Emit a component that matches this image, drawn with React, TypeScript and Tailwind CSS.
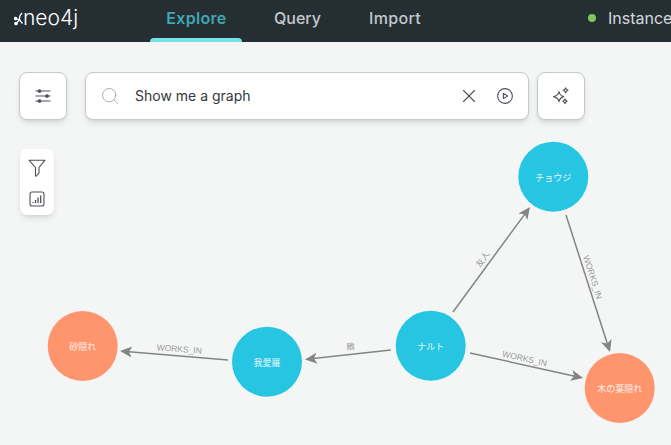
import React from "react";
import { Search, X } from "lucide-react";

const CJK = "'Liberation Sans','Noto Sans CJK JP',sans-serif";

const nodes = [
  { x: 82.7, y: 346, label: "砂隠れ", fill: "#ff956d" },
  { x: 267, y: 361.7, label: "我愛羅", fill: "#26c6e2" },
  { x: 430.7, y: 345.7, label: "ナルト", fill: "#26c6e2" },
  { x: 619.7, y: 388, label: "木の葉隠れ", fill: "#ff956d" },
  { x: 553.3, y: 176.7, label: "チョウジ", fill: "#26c6e2" },
];

const edges = [
  { x1: 228, y1: 360, x2: 120, y2: 351 },
  { x1: 391, y1: 350, x2: 305, y2: 359.5 },
  { x1: 470, y1: 353, x2: 583, y2: 378 },
  { x1: 453, y1: 312, x2: 530, y2: 207 },
  { x1: 566, y1: 215, x2: 610, y2: 352 },
];

const edgeLabels = [
  { x: 179, y: 352, rotate: 4.5, text: "WORKS_IN" },
  { x: 351, y: 349.5, rotate: -6, text: "敵" },
  { x: 524, y: 361.5, rotate: 12.5, text: "WORKS_IN" },
  { x: 485, y: 261, rotate: -54, text: "友人" },
  { x: 590, y: 278, rotate: 72, text: "WORKS_IN" },
];

function Arrow({ x1, y1, x2, y2 }: { x1: number; y1: number; x2: number; y2: number }) {
  const a = (Math.atan2(y2 - y1, x2 - x1) * 180) / Math.PI;
  return (
    <g>
      <line x1={x1} y1={y1} x2={x2 - 6 * Math.cos((a * Math.PI) / 180)} y2={y2 - 6 * Math.sin((a * Math.PI) / 180)} stroke="#848484" strokeWidth="1.5" />
      <path d="M0 0 L-12 -5.5 L-9 0 L-12 5.5 Z" fill="#848484" transform={`translate(${x2} ${y2}) rotate(${a})`} />
    </g>
  );
}

function Graph() {
  return (
    <svg className="absolute left-0 top-0" width="671" height="445" viewBox="0 0 671 445" style={{ fontFamily: CJK }}>
      {edges.map((e, i) => (
        <Arrow key={i} {...e} />
      ))}
      {edgeLabels.map((l, i) => (
        <text key={i} x={l.x} y={l.y} transform={`rotate(${l.rotate} ${l.x} ${l.y})`} textAnchor="middle" fontSize="8.5" fill="#999999">
          {l.text}
        </text>
      ))}
      {nodes.map((n) => (
        <g key={n.label}>
          <circle cx={n.x} cy={n.y} r="35" fill={n.fill} />
          <text x={n.x} y={n.y + 4} textAnchor="middle" fontSize="9" fill="#ffffff" fillOpacity="0.9">
            {n.label}
          </text>
        </g>
      ))}
    </svg>
  );
}

function Logo() {
  return (
    <div className="flex w-[150px] items-center pl-[14px] text-white">
      <svg width="11" height="16" viewBox="0 0 11 16" className="mt-[5px] -mr-[2px]" fill="none" stroke="#ffffff" strokeWidth="1.3">
        <path d="M8 1 C6 3 5 5 5.5 8 L8.5 11.5" />
        <path d="M1.5 6.5 L5.5 8 L2 11.5" />
        <circle cx="1.5" cy="6.5" r="1.2" fill="#ffffff" />
        <circle cx="2" cy="11.5" r="1.2" fill="#ffffff" />
      </svg>
      <span className="text-[21px] leading-none font-light font-['Inter',sans-serif]">neo4j</span>
    </div>
  );
}

function SlidersIcon() {
  return (
    <svg width="18" height="16" viewBox="0 0 18 16" fill="none" stroke="#4d5157" strokeWidth="1.1">
      <path d="M1.5 3 H16.5 M1.5 8 H16.5 M1.5 13 H16.5" />
      <circle cx="5.5" cy="3" r="1.3" fill="#4d5157" />
      <circle cx="13" cy="8" r="1.3" fill="#4d5157" />
      <circle cx="5.5" cy="13" r="1.3" fill="#4d5157" />
    </svg>
  );
}

function SparkleIcon() {
  return (
    <svg width="18" height="18" viewBox="0 0 18 18" fill="none" stroke="#4d5157" strokeWidth="1.1" strokeLinejoin="round">
      <path d="M7 4.5 C7.6 7.6 8.6 8.8 11.6 9.6 C8.6 10.4 7.6 11.6 7 14.7 C6.4 11.6 5.4 10.4 1.6 9.6 C5.4 8.8 6.4 7.6 7 4.5 Z" />
      <path d="M13.6 .8 C13.9 2.2 14.4 2.8 16 3.3 C14.4 3.8 13.9 4.4 13.6 5.8 C13.3 4.4 12.8 3.8 11.2 3.3 C12.8 2.8 13.3 2.2 13.6 .8 Z" />
      <path d="M13 12 C13.3 13.2 13.7 13.7 15.2 14.2 C13.7 14.7 13.3 15.2 13 16.6 C12.7 15.2 12.3 14.7 10.8 14.2 C12.3 13.7 12.7 13.2 13 12 Z" />
    </svg>
  );
}

function PlayCircle() {
  return (
    <svg width="18" height="18" viewBox="0 0 18 18" fill="none" stroke="#4d5157" strokeWidth="1.1" strokeLinejoin="round">
      <circle cx="9" cy="9" r="7.4" />
      <path d="M7.4 6.4 L11.6 9 L7.4 11.6 Z" />
    </svg>
  );
}

function FunnelIcon() {
  return (
    <svg width="18" height="18" viewBox="0 0 18 18" fill="none" stroke="#4d5157" strokeWidth="1.1" strokeLinejoin="round">
      <path d="M1 1.2 H17 L11 8.5 V13.5 C11 15 9.5 15 8.5 17 H7.5 V8.5 Z" />
    </svg>
  );
}

function BarsIcon() {
  return (
    <svg width="16" height="16" viewBox="0 0 16 16" fill="none" stroke="#4d5157">
      <rect x="1" y="1" width="14" height="14" rx="2" strokeWidth="1.1" />
      <path d="M4 12 V11 M6.5 12 V9 M9 12 V6.5 M11.7 12 V4.5" strokeWidth="1.3" />
    </svg>
  );
}

export default function App() {
  return (
    <div className="relative h-[445px] w-[671px] overflow-hidden bg-[#f4f6f6] font-['Inter',sans-serif]">
      <Graph />

      <header className="relative flex h-[42px] items-center overflow-hidden bg-[#252f33] text-[16px]">
        <div className="mb-[7px] flex items-center">
          <Logo />
        </div>
        <nav className="flex h-full gap-[16px]">
          <div className="relative flex w-[92px] items-center justify-center pb-[7px] pl-[1px] font-semibold tracking-[0.3px] text-[#3fa7b2]">
            Explore
            <span className="absolute bottom-0 left-0 h-[4px] w-full rounded-t-[4px] bg-[#73e4e6]" />
          </div>
          <div className="flex w-[79px] items-center justify-center pb-[7px] font-medium text-[#c4c8cc]">Query</div>
          <div className="flex w-[84px] items-center justify-center pb-[7px] font-medium tracking-[0.3px] text-[#c4c8cc]">Import</div>
        </nav>
        <div className="mb-[7px] ml-[151px] flex items-center gap-[12px] whitespace-nowrap text-[#d6d9dc]">
          <span className="h-[8px] w-[8px] shrink-0 rounded-full bg-[#83c55f]" />
          Instance
        </div>
      </header>

      <div className="relative mt-[30px] flex items-start pl-[19px]">
        <button className="flex h-[48px] w-[48px] items-center justify-center rounded-[8px] border border-[#c4c8cf] bg-white shadow-md">
          <SlidersIcon />
        </button>
        <div className="ml-[18px] flex h-[48px] w-[444px] items-center rounded-[8px] border border-[#c4c8cf] bg-white pl-[14px] pr-[14px] shadow-md">
          <Search size={20} strokeWidth={1} color="#9aa0a6" />
          <span className="mb-[1px] ml-[15px] flex-1 text-[14px] text-[#34383d]">Show me a graph</span>
          <X size={22} strokeWidth={1.2} color="#4d5157" />
          <div className="ml-[16px]">
            <PlayCircle />
          </div>
        </div>
        <button className="ml-[8px] flex h-[48px] w-[48px] items-center justify-center rounded-[8px] border border-[#c4c8cf] bg-white shadow-md">
          <SparkleIcon />
        </button>
      </div>

      <div className="relative ml-[20px] mt-[29px] flex h-[66px] w-[34px] flex-col items-center gap-[14px] rounded-[7px] bg-white pt-[10px] shadow-md">
        <FunnelIcon />
        <BarsIcon />
      </div>
    </div>
  );
}
